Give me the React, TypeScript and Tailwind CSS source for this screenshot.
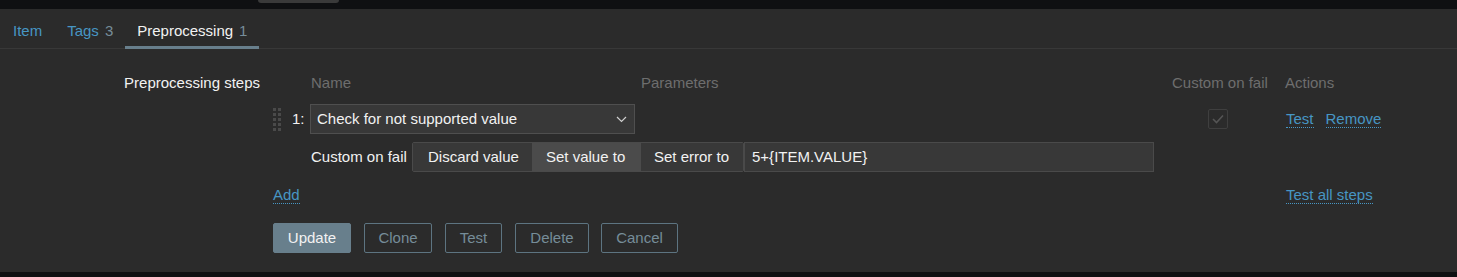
import React from "react";

const font = { fontFamily: '"Liberation Sans", Arial, sans-serif' };

function DottedLink({ children }: { children: React.ReactNode }) {
  return (
    <a className="text-[#4796c4] border-b border-dotted border-[#4796c4] leading-[17px] cursor-pointer">
      {children}
    </a>
  );
}

function DragHandle() {
  return (
    <div className="grid grid-cols-2 gap-x-[2px] gap-y-[2px] w-[8px]">
      {Array.from({ length: 10 }).map((_, i) => (
        <span key={i} className="w-[3px] h-[3px] bg-[#4a4a4a]" />
      ))}
    </div>
  );
}

export default function App() {
  return (
    <div className="w-[1457px] h-[277px] bg-[#0f1012] flex flex-col text-[15px] text-[#f2f2f2]" style={font}>
      {/* top bar */}
      <div className="h-[9px] flex">
        <div className="ml-[258px] w-[81px] h-[3px] rounded-b-[3px] bg-[#3a3a3a]" />
      </div>

      <div className="h-[263px] bg-[#2b2b2b] flex flex-col">
        {/* tabs */}
        <div className="h-[40px] border-b border-[#383838] flex pl-px">
          <div className="h-[40px] -mb-px px-[12px] pt-[4px] flex items-center text-[#4796c4]">Item</div>
          <div className="h-[40px] -mb-px pl-[13px] pr-[12px] pt-[4px] flex items-center text-[#4796c4]">
            Tags<span className="ml-[6px] text-[#768d99]">3</span>
          </div>
          <div className="h-[40px] -mb-px px-[12px] pt-[7px] flex items-center border-b-[3px] border-[#687f8c]">
            Preprocessing<span className="ml-[6px] text-[#768d99]">1</span>
          </div>
        </div>

        {/* form */}
        <div className="flex pt-[24px]">
          <div className="w-[260px] text-right h-[20px] leading-[20px]">Preprocessing steps</div>
          <div className="ml-[13px] flex flex-col">
            {/* header */}
            <div className="flex h-[20px] items-center text-[#6e6e6e]">
              <div className="w-[38px]" />
              <div className="w-[330px]">Name</div>
              <div className="w-[531px]">Parameters</div>
              <div className="w-[113px]">Custom on fail</div>
              <div>Actions</div>
            </div>

            {/* step row */}
            <div className="flex items-center h-[30px] mt-[11px]">
              <div className="w-[19px] flex items-center">
                <DragHandle />
              </div>
              <div className="w-[18px]">1:</div>
              <div className="w-[331px]">
                <div className="w-[325px] h-[30px] bg-[#383838] border border-[#4f4f4f] flex items-center justify-between pl-[6px] pr-[7px]">
                  <span>Check for not supported value</span>
                  <svg width="11" height="7" viewBox="0 0 11 7" fill="none">
                    <polyline points="1,1 5.5,5.5 10,1" stroke="#d0d0d0" strokeWidth="1.2" />
                  </svg>
                </div>
              </div>
              <div className="w-[531px]" />
              <div className="w-[113px]">
                <div className="ml-[36px] w-[20px] h-[20px] border border-[#3f3f3f] rounded-[2px] bg-[#2b2b2b] flex items-center justify-center">
                  <svg width="12" height="10" viewBox="0 0 12 10" fill="none">
                    <polyline points="1,5 4.5,8.5 11,1.5" stroke="#555555" strokeWidth="1.6" />
                  </svg>
                </div>
              </div>
              <div className="flex gap-[12px] pl-px">
                <DottedLink>Test</DottedLink>
                <DottedLink>Remove</DottedLink>
              </div>
            </div>

            {/* custom on fail row */}
            <div className="flex items-center h-[30px] mt-[8px]">
              <div className="w-[37px]" />
              <div className="w-[102px] pl-px">Custom on fail</div>
              <div className="flex h-[30px] border border-[#4a4a4a] rounded-[2px] overflow-hidden">
                <div className="w-[119px] flex items-center pl-[15px] bg-[#383838]">Discard value</div>
                <div className="w-[109px] flex items-center pl-[14px] bg-[#4b4b4b]">Set value to</div>
                <div className="w-[102px] flex items-center pl-[13px] bg-[#383838]">Set error to</div>
              </div>
              <div className="w-[410px] h-[30px] bg-[#383838] border border-[#4a4a4a] flex items-center pl-[7px]">
                5+{"{"}ITEM.VALUE{"}"}
              </div>
            </div>

            {/* add row */}
            <div className="flex items-center h-[20px] mt-[13px]">
              <div className="w-[1013px]">
                <DottedLink>Add</DottedLink>
              </div>
              <DottedLink>Test all steps</DottedLink>
            </div>

            {/* buttons */}
            <div className="flex gap-[13px] mt-[18px]">
              <button className="h-[30px] w-[78px] rounded-[2px] bg-[#687f8c] text-[#f2f2f2] border border-[#687f8c]">Update</button>
              <button className="h-[30px] w-[68px] rounded-[2px] border border-[#5d7481] text-[#768d99]">Clone</button>
              <button className="h-[30px] w-[57px] rounded-[2px] border border-[#5d7481] text-[#768d99]">Test</button>
              <button className="h-[30px] w-[74px] rounded-[2px] border border-[#5d7481] text-[#768d99]">Delete</button>
              <button className="h-[30px] w-[77px] rounded-[2px] border border-[#5d7481] text-[#768d99] -ml-px">Cancel</button>
            </div>
          </div>
        </div>
      </div>
    </div>
  );
}
